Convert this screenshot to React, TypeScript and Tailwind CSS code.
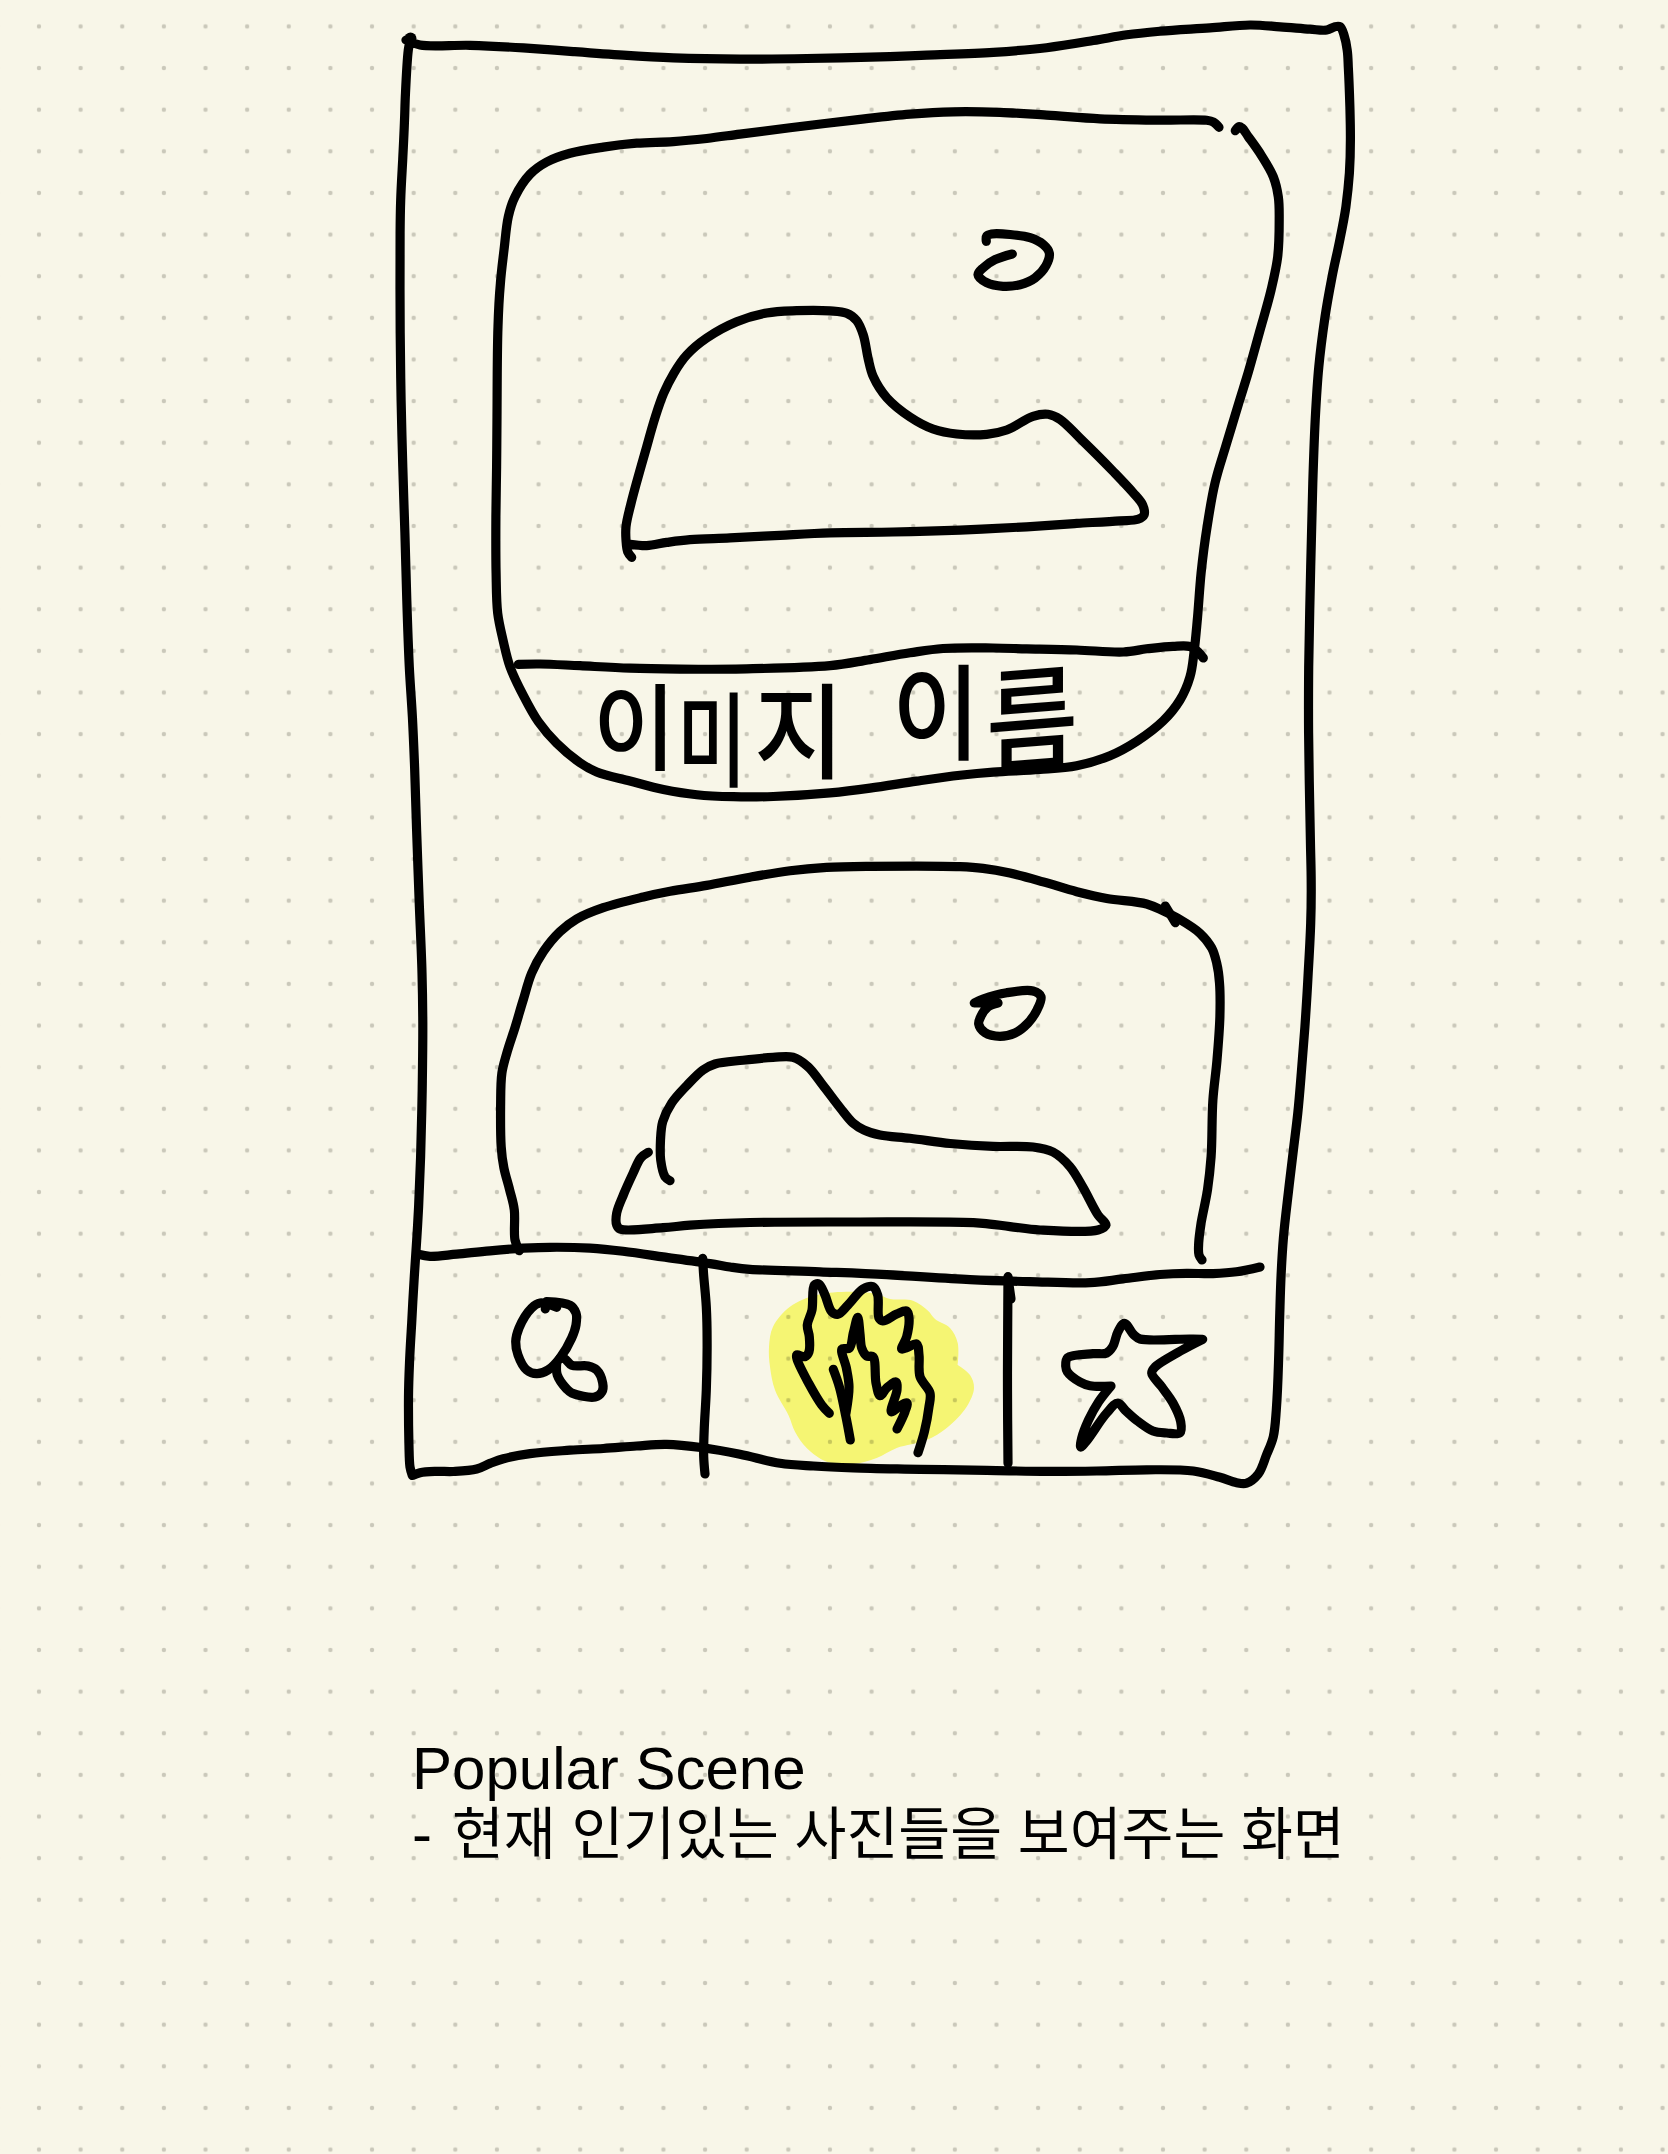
import type { ReactNode } from "react";

type Stroke = string;

const dist = (a: number[], b: number[]) => Math.hypot(a[0] - b[0], a[1] - b[1]);

/** Eases nearly straight runs a little toward the local chord, leaving real bends alone. */
function relax(p: number[][]): number[][] {
  return p.map((v, i) => {
    if (i === 0 || i === p.length - 1) return v;
    const [a, b] = [p[i - 1], p[i + 1]];
    const [da, db] = [dist(a, v), dist(v, b)];
    if (da < 14 || db < 14) return v;
    const t = da / (da + db);
    const off = [0, 1].map((k) => a[k] + (b[k] - a[k]) * t - v[k]);
    if (Math.hypot(off[0], off[1]) > 2) return v;
    return [v[0] + off[0] * 0.3, v[1] + off[1] * 0.3];
  });
}

/** Turns "x,y x,y ..." into a smooth centripetal spline; a repeated point makes a hard corner. */
function spline(points: Stroke, closed = false): string {
  const raw = points
    .trim()
    .split(/\s+/)
    .map((s) => s.split(",").map(Number));
  const p = relax(raw);
  const n = p.length;
  const at = (i: number) =>
    closed ? p[(i + n) % n] : p[Math.max(0, Math.min(n - 1, i))];
  const gap = (a: number[], b: number[]) => Math.sqrt(dist(a, b));
  let d = `M${p[0][0]} ${p[0][1]}`;
  for (let i = 0; i < (closed ? n : n - 1); i++) {
    const [p0, p1, p2, p3] = [at(i - 1), at(i), at(i + 1), at(i + 2)];
    const [d1, d2, d3] = [gap(p0, p1), gap(p1, p2), gap(p2, p3)];
    if (d2 === 0) continue;
    const c1 = p1.map((v, k) =>
      d1 === 0
        ? v
        : (d1 * d1 * p2[k] - d2 * d2 * p0[k] + (2 * d1 * d1 + 3 * d1 * d2 + d2 * d2) * v) /
          (3 * d1 * (d1 + d2)),
    );
    const c2 = p2.map((v, k) =>
      d3 === 0
        ? v
        : (d3 * d3 * p1[k] - d2 * d2 * p3[k] + (2 * d3 * d3 + 3 * d3 * d2 + d2 * d2) * v) /
          (3 * d3 * (d3 + d2)),
    );
    d += `C${[...c1, ...c2, ...p2].map((v) => v.toFixed(1)).join(" ")}`;
  }
  return d;
}

function Ink({
  viewBox,
  strokes,
  children,
}: {
  viewBox: string;
  strokes: Stroke[];
  children?: ReactNode;
}) {
  return (
    <svg
      viewBox={viewBox}
      className="pointer-events-none absolute inset-0 h-full w-full overflow-visible"
      fill="none"
      stroke="#000"
      strokeWidth={9.2}
      strokeLinecap="round"
      strokeLinejoin="round"
      aria-hidden="true"
    >
      {children}
      {strokes.map((s, i) => (
        <path key={i} d={spline(s)} />
      ))}
    </svg>
  );
}

const FRAME: Stroke[] = [
  `410.5,38.5 408.3,50 405.2,93 404.6,123 402.7,160 400.5,200 400,233 400,333 401,400 402.7,467 405,533 406.7,600 409,667 412.6,717 414.7,767 416.5,830 419.3,907 422.3,973 423,1023 422.3,1090 420.7,1157 418.7,1207 416.7,1240 414,1280 411.7,1323 409.3,1363 408.3,1397 408.7,1443 410,1467 412.3,1475.5 412.3,1475.5
   420,1472.7 436.7,1471 453.3,1472 476.7,1469 490,1463.3 503.3,1458.3 530,1453 570,1450 603.3,1448.7 636.7,1445.8 666.7,1444.3 703.3,1447.3 740,1454 780,1463.3 813.3,1466.3 853.3,1468 920,1469.3 986.7,1470.3 1046.7,1471.7 1096.7,1471.3 1146.7,1469.2 1193.3,1471 1220,1477 1236.7,1482.7 1246.7,1483.2 1258.3,1474
   1266.7,1455 1273.3,1436.7 1276.7,1410 1278.7,1363 1279.7,1313 1281,1275 1283,1238 1288.3,1193 1293.3,1150 1298.1,1113 1301.3,1073 1305,1027 1308.3,973 1311,923 1311.5,883 1310.3,840 1308.3,733 1308.5,667 1310.7,567 1312.7,483 1315,420 1318.3,367 1324.7,317 1331.7,277 1340,240 1346.3,207 1349.7,173 1350.7,140 1350,107 1348.3,67 1347.7,50 1344,35 1340,26.7
   1335,26.7 1326.7,30 1310,29.3 1280,26.7 1250,25 1210,28 1160,31 1126.7,34.3 1093.3,40.7 1046.7,48.3 993.3,52.7 926.7,55 890,56.8 806.7,58.7 740,59.3 673.3,58.3 623.3,55.3 573.3,51.7 523.3,47.7 470,44.9 420,45 406,40`,
];

const CARD_ONE: Stroke[] = [
  `1219,127.3 1213.3,122 1206.7,120.3 1160,120.3 1100,119.3 1046.7,115 1000,112 953.3,111.3 910,113.7 858,119.5 790,127.7 740,134 706.7,138.7 673.3,142 636.7,142.7 603.3,146.7 570,153.3 546.7,162 530,174.3 515,196.7 508.3,216.7 504,250 500,283.3 497.5,326.7 497,416.7 496.7,466.7 495.7,516.7 495.7,573.3 497.7,613.3 502.7,640 510,666.7 523.3,696.7 538.3,721.7 556.7,743.3 580,762.7 596.7,772 630,781 663.3,790 696.7,795.3 733.3,797 773.3,797 830,793.3 870,788.3 916.7,781 960,775 993.3,771.7 1040,770 1076.7,765.7 1110,755.7 1136.7,741.3 1163.3,720.7 1180,700 1190,676.7 1194.3,653.3 1197.7,616.7 1200.7,573 1206.7,526.7 1215,483 1226.7,443 1239,402 1248.3,373 1260,330 1271.7,290 1277.7,256.7 1279.7,220 1278.3,196.7 1273.3,176.7 1261.7,155 1248.3,136.7 1242,128 1238.7,126.7 1235.3,130.7`,
  `518.3,664.3 540,663.7 580,665.7 630,668.5 680,669.3 746.7,669.3 830,665.7 870,659.8 910,652.5 943,648.5 993,647.7 1026.7,649 1076.7,649.7 1123.3,652 1146.7,648.7 1173,646 1190,646.5 1198,651.7 1203.3,658`,
  `631.7,557.3 627.7,551.7 626,540 626,526.7 630.7,503 646.7,446.7 655,416.7 663.3,393 673.3,373 686.7,355 706.7,338 736.7,321.7 766.7,313 796.7,310.3 830,310.3 846.7,313.3 856.7,320.7 863.3,335 867.7,358 873.3,376.7 887,398 910,417 933,429 956.7,434 986.7,434.3 1006.7,430 1033,416.3 1048,414.3 1060,419.3 1080,438 1113,471 1133,492 1142.7,505 1144,515 1138,519.3 1120,521 1076.7,523.3 1026.7,527 960,530.3 893,532.3 830,532.3 780,535.3 730,538 690,539.3 666.7,542.3 646.7,545.7 630,544.3`,
  `986.3,241.3 986.7,236 991.7,234 1010,234 1030,237.7 1043,244.3 1049.3,253 1046,265.7 1035,278 1020,284.7 1003,286.3 986.7,282.7 978,274.7 983.3,267.7 995,259.7 1012.3,254`,
];

const CARD_TWO: Stroke[] = [
  `519.3,1250.7 515,1240 514.3,1210 510,1190 503.3,1168 500.7,1146.7 500.3,1106.7 501.9,1073 506.9,1051.7 515.5,1026.7 523,1000 531.7,973 543.3,951.7 560,931.7 576.7,919 603.3,907.7 643.3,896.7 670,891 706.7,885.7 750,877 790,870.3 826.7,867 870,866.3 960,866.3 983,868 1010,872.7 1043.3,881.7 1076.7,892 1106.7,899 1146.7,904 1163.3,910.7 1180,919 1200,933.3 1211.7,948 1217.3,963 1220,983 1220.3,1016.7 1217.3,1060 1212.9,1100 1211.7,1156.7 1208,1190 1200.7,1223 1198.7,1243 1199,1255 1202,1260`,
  `1165.3,906 1175.3,922.7`,
  `670,1180.7 665,1176.7 660.7,1160 660,1140 662.7,1121.7 671.7,1103 686.7,1085 703,1070 715,1064 743,1060 773,1057 793,1057.3 808,1066.7 823,1085 840,1108 853,1123 864,1130 880,1135 910,1138 950,1144 993,1146.7 1033,1147 1053,1152 1070,1166.7 1083,1186.7 1098,1215 1106,1225 1098,1230 1040,1230 1010,1226.7 983,1223 963,1222 860,1222 750,1222 690,1224.7 663,1228.3 620,1229 616.7,1225 616.7,1213 623,1195 633,1173 640.7,1158 648.3,1152.3`,
  `998,1003 988,1006.7 980.7,1016.7 978.7,1024 985,1032.7 1000,1036.3 1015,1033 1028,1023 1037,1010 1041,996.7 1033,991 1006.7,992.7 983,999 974.3,1003 974.3,1003 992.7,1003`,
];

const NAV: Stroke[] = [
  `418.3,1254.3 430,1256.3 456.7,1254.3 490,1250.7 523,1248 550,1247 590,1247.7 623,1251 663,1257 710,1263.3 730,1267.2 750,1269.7 820,1271.7 886.7,1274.3 970,1280 1030,1281.7 1090,1282.7 1123,1279 1160,1274 1186.7,1273 1213,1274 1236.7,1272.3 1260,1267`,
  `702.7,1258.3 703.3,1273 706.7,1306.7 707.3,1340 706.7,1390 704,1430 703.3,1456.7 705,1474`,
  `1008,1276.7 1007.7,1323 1007.3,1390 1008,1463.3`,
  `1008,1278 1011,1299`,
];

const SEARCH: Stroke[] = [
  `545.3,1309 546.7,1301.7 546.7,1301.7 570,1305.3 576,1313 576,1325 571.7,1338 560,1358 548,1370 536.7,1373.7 526.7,1370 518,1355 515.7,1341.7 519,1328 531.7,1308 540,1303 556.7,1307.3`,
  `556.7,1363 557.3,1375 566.7,1389 571.7,1393 595,1397 602,1391.7 602.7,1383 596.7,1370 588,1366 571.7,1365.3 565,1359 560,1358`,
];

const FLAME: Stroke[] = [
  `829.3,1413.3 821.7,1405 808,1383 797.3,1360 796.7,1355 805,1356.7 809,1351.7 809.3,1336.7 807.3,1325 812,1310 814.3,1285 819,1284 825,1295 831.7,1311.7 838,1314.3 848,1305 863,1289 873,1286.7 877.7,1295 879,1318 883,1321 896.7,1314 906.7,1311 909,1318 906.7,1336.7 901.7,1349 907,1347.5 916.7,1344 919,1355 920,1376.7 930,1393 929,1406.7 925,1431.7 918,1452.7`,
  `833.3,1369.3 840,1386.7 846,1416.7 850.3,1440`,
  `846,1413 849,1386.7 846.7,1368 842,1349 849.3,1348.3 853.3,1333 857.7,1317.3 860,1333 861.7,1348 866.7,1356 873,1356.7 876,1383 880,1395.7 886.7,1388 896,1382 897,1390 891.3,1411.7 900,1406 907,1403 905,1411.7 897,1429`,
];

const GLOW: Stroke = `769,1346.7 773,1326.7 790,1306.7 816.7,1295 850,1291.7 876.7,1294 890,1299 913,1300.7 928,1310.7 935,1319 950,1328 957.7,1343 957.7,1365 957.7,1365 970,1375 974,1388 966.7,1406.7 946.7,1428 926.7,1440 896.7,1448 876.7,1458 853,1464 826.7,1461.7 806.7,1448 795,1431.7 789,1415 775,1390 770,1366.7`;

const STAR: Stroke[] = [
  `1065.7,1366 1067.3,1371.7 1080,1382 1090,1385.7 1111,1386 1111,1386 1098,1401.7 1088,1420 1081.7,1438 1080.7,1447 1086.7,1440.7 1106.7,1413 1118,1403 1125,1410 1136.7,1421 1153,1431 1166.7,1433 1180,1432.7 1180.7,1421.7 1173,1403 1161.7,1386.7 1151.7,1373 1155,1367 1180,1350.7 1202.7,1339.3 1202.7,1339.3 1190,1339 1140,1339 1134,1335 1124.3,1323.3 1118,1331.7 1112.7,1346.7 1106.7,1353 1093,1353.7 1067.7,1357.7 1065.7,1366`,
];

function Caption() {
  return (
    <div className="flex h-[148px] pl-[103px] font-['Noto_Sans_CJK_KR',sans-serif] text-[100px] leading-[148px] font-medium text-black">
      <span className="w-[84px] origin-left -translate-y-[3px] scale-x-[.9] scale-y-[.94]">이</span>
      <span className="w-[77px] origin-left translate-y-[9px] scale-x-[.76] scale-y-[1.03]">미</span>
      <span className="w-[138px] origin-left scale-x-[.98] scale-y-[1.04]">지</span>
      <span className="w-[94px] origin-left -translate-y-[19px] scale-x-[.96] scale-y-[1.04]">이</span>
      <span className="origin-left -translate-y-[10px] scale-y-[1.13] -skew-y-[4deg]">름</span>
    </div>
  );
}

export default function App() {
  return (
    <main className="relative h-[2154px] w-[1668px] overflow-hidden bg-[#f8f6e8]">
      <svg className="absolute inset-0 h-full w-full" aria-hidden="true">
        <pattern id="dots" x="18.2" y="5.6" width="41.63" height="41.63" patternUnits="userSpaceOnUse">
          <circle cx="20.8" cy="20.8" r="2.2" fill="#cac8ba" />
        </pattern>
        <rect width="100%" height="100%" fill="url(#dots)" />
      </svg>

      <section className="relative mt-[20px] ml-[396px] flex h-[1468px] w-[962px] flex-col">
        <Ink viewBox="396 20 962 1468" strokes={FRAME}>
          <circle cx="410.5" cy="38.5" r="6" fill="#000" stroke="none" />
        </Ink>

        <article className="relative mt-[85px] ml-[94px] flex h-[695px] w-[800px] shrink-0 flex-col justify-end">
          <Ink viewBox="490 105 800 695" strokes={CARD_ONE} />
          <Caption />
        </article>

        <article className="relative mt-[60px] ml-[98px] h-[402px] w-[732px] shrink-0">
          <Ink viewBox="494 860 732 402" strokes={CARD_TWO} />
        </article>

        <nav className="relative ml-[12px] grid h-[226px] w-[872px] shrink-0 grid-cols-[298px_302px_272px]">
          <Ink viewBox="408 1262 872 226" strokes={NAV} />
          <button className="relative" aria-label="Search">
            <Ink viewBox="408 1262 298 226" strokes={SEARCH} />
          </button>
          <button className="relative mix-blend-multiply" aria-label="Popular">
            <Ink viewBox="706 1262 302 226" strokes={FLAME}>
              <path d={spline(GLOW, true)} fill="#fcfe7e" stroke="none" />
            </Ink>
          </button>
          <button className="relative" aria-label="Favorites">
            <Ink viewBox="1008 1262 272 226" strokes={STAR} />
          </button>
        </nav>
      </section>

      <section className="relative mt-[249px] ml-[412px] text-black">
        <h1 className="h-[64px] font-['Liberation_Sans',sans-serif] text-[60px] leading-[64px] font-normal whitespace-nowrap">
          Popular Scene
        </h1>
        <p className="flex h-[66px] items-baseline gap-[20px] font-['Liberation_Sans','Noto_Sans_CJK_KR',sans-serif] text-[56.4px] leading-[66px] whitespace-nowrap">
          <span className="text-[60px] leading-[66px]">-</span>
          <span>현재 인기있는 사진들을 보여주는 화면</span>
        </p>
      </section>
    </main>
  );
}
